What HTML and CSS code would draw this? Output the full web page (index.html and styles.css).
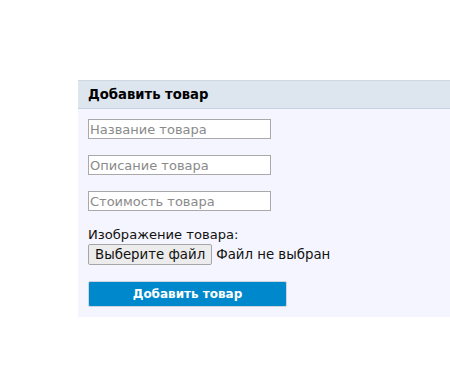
FILE: index.html
```html
<!DOCTYPE html>
<html lang="ru">
<head>
    <meta charset="UTF-8">
    <meta name="viewport" content="width=device-width, initial-scale=1.0">
    <title>Добавить товар</title>
    <link rel="stylesheet" href="styles.css">
</head>
<body>
    <div id="panel">
        <div class="panel-head">Добавить товар</div>
        <form class="panel-body">
            <input class="field" type="text" placeholder="Название товара">
            <input class="field" type="text" placeholder="Описание товара">
            <input class="field" type="text" placeholder="Стоимость товара">
            <label class="img-label">Изображение товара:</label>
            <div class="file-row">
                <button type="button" class="file-btn">Выберите файл</button>
                <span class="file-name">Файл не выбран</span>
            </div>
            <button type="button" class="submit">Добавить товар</button>
        </form>
    </div>
</body>
</html>
```

FILE: styles.css
```css
*{
    box-sizing: border-box;
    margin: 0px;
    padding: 0px;
}
body{
    background: #fff;
    font-family: "DejaVu Sans", Verdana, sans-serif;
    font-size: 13.33px;
    color: #111;
}
#panel{
    margin: 80px 0 0 78px;
    background: #f4f5fe;
}
.panel-head{
    background: #dde5ef;
    border-top: 1px solid #cdd8e5;
    border-bottom: 1px solid #c8d3e2;
    height: 29px;
    line-height: 27px;
    padding: 0 10px;
    font-weight: bold;
    font-size: 13.2px;
    color: #000;
}
.panel-body{
    display: flex;
    flex-direction: column;
    align-items: flex-start;
    padding: 10px 10px 10px;
}
.field{
    width: 183px;
    height: 20px;
    border: 1px solid #a9a9a9;
    background: #fff;
    font-family: "DejaVu Sans", Verdana, sans-serif;
    font-size: 13px;
    padding: 0 1px;
    margin-bottom: 16px;
}
.field::placeholder{
    color: #8a8a8a;
}
.img-label{
    line-height: 16px;
    font-size: 13.1px;
    color: #111;
}
.file-row{
    display: flex;
    align-items: center;
    margin-top: 1px;
}
.file-btn{
    height: 21px;
    padding: 0 6px;
    border: 1px solid #a6a6a6;
    border-radius: 2px;
    background: #ececec;
    font-family: "DejaVu Sans", Verdana, sans-serif;
    font-size: 13.33px;
    color: #111;
}
.file-name{
    margin-left: 4px;
}
.submit{
    margin-top: 16px;
    width: 199px;
    height: 26px;
    background: #0088cc;
    border: 1px solid #d0d4de;
    border-radius: 2px;
    color: #fff;
    font-weight: bold;
    font-family: "DejaVu Sans", Verdana, sans-serif;
    font-size: 12px;
}
```
